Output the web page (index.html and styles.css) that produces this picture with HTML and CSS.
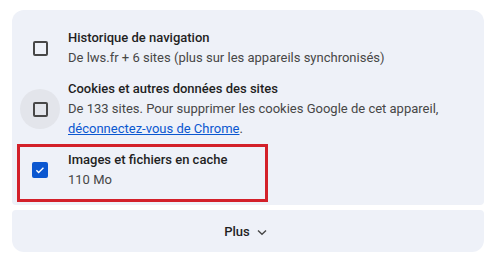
FILE: index.html
```html
<!DOCTYPE html>
<html lang="fr">
<head>
<meta charset="utf-8">
<link rel="stylesheet" href="styles.css">
</head>
<body>
<div class="wrap">
  <div class="card list">
    <div class="row">
      <div class="cb-wrap"><span class="cb"></span></div>
      <div class="text">
        <div class="title">Historique de navigation</div>
        <div class="sub">De lws.fr + 6 sites (plus sur les appareils synchronisés)</div>
      </div>
    </div>
    <div class="row">
      <div class="cb-wrap hover"><span class="cb"></span></div>
      <div class="text">
        <div class="title">Cookies et autres données des sites</div>
        <div class="sub">De 133 sites. Pour supprimer les cookies Google de cet appareil, <a class="link" href="#">déconnectez-vous de Chrome</a>.</div>
      </div>
    </div>
    <div class="row">
      <div class="cb-wrap"><span class="cb checked"><svg viewBox="0 0 16 16" width="12" height="12"><path d="M3.2 8.3l3 3 6.4-6.4" fill="none" stroke="#fff" stroke-width="1.8"/></svg></span></div>
      <div class="text">
        <div class="title">Images et fichiers en cache</div>
        <div class="sub">110 Mo</div>
      </div>
    </div>
    <div class="highlight"></div>
  </div>
  <div class="card more">
    <span class="more-label">Plus</span>
    <svg class="chev" viewBox="0 0 12 12" width="12" height="12"><path d="M2 4.5l4 3.8 4-3.8" fill="none" stroke="#474747" stroke-width="1.4"/></svg>
  </div>
</div>
</body>
</html>
```
FILE: styles.css
```css
* { box-sizing: border-box; }
html, body { margin: 0; padding: 0; background: #fff; }
body {
  font-family: Roboto, "Noto Sans", Arial, sans-serif;
  color: #1f1f1f;
  width: 496px;
  height: 260px;
  overflow: hidden;
}
.wrap {
  padding: 10px 12px 0 12px;
  display: flex;
  flex-direction: column;
  gap: 5px;
}
.card {
  background: #eef1f8;
}
.list {
  position: relative;
  border-radius: 12px 12px 4px 4px;
  padding: 13px 8px 9px 8px;
  display: flex;
  flex-direction: column;
}
.row {
  display: flex;
  align-items: center;
  gap: 8px;
  padding: 5px 0 6px 0;
}
.cb-wrap {
  width: 40px;
  height: 40px;
  flex: none;
  border-radius: 50%;
  display: flex;
  align-items: center;
  justify-content: center;
}
.cb-wrap.hover { background: #e3e5eb; }
.cb {
  width: 15px;
  height: 15px;
  border: 2px solid #474747;
  border-radius: 2px;
  display: flex;
  align-items: center;
  justify-content: center;
}
.cb.checked {
  background: #0b57d0;
  border-color: #0b57d0;
  width: 16px;
  height: 16px;
}
.text { font-size: 13px; line-height: 20px; }
.title { font-weight: 500; color: #1f1f1f; }
.sub { color: #474747; }
.link { color: #0b57d0; text-decoration: underline; }
.highlight {
  position: absolute;
  left: 5px;
  top: 134px;
  width: 251px;
  height: 58px;
  border: 3px solid #d3202a;
}
.more {
  height: 42px;
  border-radius: 4px 4px 12px 12px;
  display: flex;
  align-items: center;
  justify-content: center;
  gap: 6px;
  padding-right: 4px;
  font-size: 13px;
  font-weight: 500;
  color: #1f1f1f;
}
.chev { margin-top: 2px; }
```
